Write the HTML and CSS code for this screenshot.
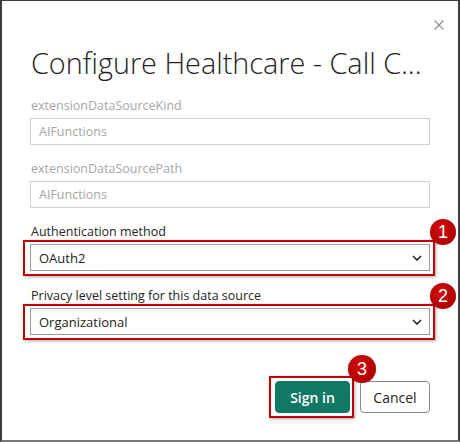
FILE: index.html
```html
<!DOCTYPE html>
<html>
<head>
<meta charset="utf-8">
<link rel="stylesheet" href="styles.css">
</head>
<body>
<div class="dialog">
  <div class="header">
    <svg class="close" width="10" height="10" viewBox="0 0 10 10"><path d="M0.5 0.5 L9.5 9.5 M9.5 0.5 L0.5 9.5" stroke="#8c8c8c" stroke-width="1.1" fill="none"/></svg>
  </div>
  <h1 class="title">Configure Healthcare - Call C...</h1>
  <div class="fields">
    <div class="field disabled">
      <div class="label">extensionDataSourceKind</div>
      <div class="input">AIFunctions</div>
    </div>
    <div class="field disabled">
      <div class="label">extensionDataSourcePath</div>
      <div class="input">AIFunctions</div>
    </div>
    <div class="field active">
      <div class="label">Authentication method</div>
      <div class="select-wrap">
        <div class="select">
          <span>OAuth2</span>
          <svg class="chev" width="10" height="6" viewBox="0 0 10 6"><path d="M1 1 L5 5 L9 1" fill="none" stroke="#252423" stroke-width="1.6"/></svg>
        </div>
        <div class="mark"></div>
        <div class="badge b1">1</div>
      </div>
    </div>
    <div class="field active">
      <div class="label">Privacy level setting for this data source</div>
      <div class="select-wrap">
        <div class="select">
          <span>Organizational</span>
          <svg class="chev" width="10" height="6" viewBox="0 0 10 6"><path d="M1 1 L5 5 L9 1" fill="none" stroke="#252423" stroke-width="1.6"/></svg>
        </div>
        <div class="mark"></div>
        <div class="badge b2">2</div>
      </div>
    </div>
  </div>
  <div class="actions">
    <div class="btn-wrap">
      <button class="btn primary">Sign in</button>
      <div class="mark mark-btn"></div>
      <div class="badge b3">3</div>
    </div>
    <button class="btn secondary">Cancel</button>
  </div>
</div>
</body>
</html>
```
FILE: styles.css
```css
* { box-sizing: border-box; }
html, body { margin: 0; padding: 0; background: #fff; }
body { font-family: "Open Sans", "Noto Sans", sans-serif; }
.dialog {
  width: 460px;
  height: 442px;
  border-style: solid;
  border-color: #3c3c3c #3c3c3c #7a7a7a #3c3c3c;
  border-width: 1px 2px 2px 2px;
  padding: 0 28px 0 28px;
  background: #fff;
}
.header {
  height: 42px;
  display: flex;
  justify-content: flex-end;
  align-items: flex-start;
  padding-top: 19px;
  margin-right: -14px;
}
.close { display: block; }
.title {
  margin: 0;
  font-weight: 300;
  font-size: 28.8px;
  line-height: 40px;
  color: #252423;
  padding-left: 1px;
  white-space: nowrap;
}
.fields { margin-top: 14px; display: flex; flex-direction: column; gap: 15px; }
.field { display: flex; flex-direction: column; gap: 3px; }
.label {
  font-size: 12.5px;
  line-height: 18px;
  padding-left: 1px;
  color: #252423;
}
.disabled .label { color: #a6a6a6; }
.input {
  height: 27px;
  border: 1px solid #d0d0d0;
  font-size: 12.5px;
  line-height: 25px;
  padding-left: 8px;
  color: #a6a6a6;
}
.field.active + .field.active { margin-top: 1px; }
.select-wrap { position: relative; }
.select {
  height: 27px;
  border: 1px solid #9a9a9a;
  display: flex;
  align-items: center;
  justify-content: space-between;
  padding: 0 7px 0 8px;
  font-size: 13px;
  color: #252423;
}
.mark {
  position: absolute;
  left: -7px; right: -5px; top: -4px; bottom: -5px;
  border: 2px solid #c00000;
  box-shadow: 1px 1px 3px rgba(0,0,0,0.35);
  pointer-events: none;
}
.badge {
  position: absolute;
  width: 26px; height: 26px;
  border-radius: 50%;
  background: radial-gradient(circle at 40% 35%, #d01010, #b00000 70%);
  color: #fff;
  font-family: "Liberation Sans", Arial, sans-serif;
  font-size: 18px;
  line-height: 26px;
  text-align: center;
  box-shadow: 0 0 1px rgba(0,0,0,0.5);
}
.b1, .b2 { right: -26px; top: -25px; }
.actions {
  margin-top: 46px;
  display: flex;
  justify-content: flex-end;
  gap: 10px;
}
.btn-wrap { position: relative; }
.btn {
  height: 32px;
  border-radius: 4px;
  font-family: "Open Sans", "Noto Sans", sans-serif;
  font-size: 14px;
  font-weight: 600;
  padding: 0;
  cursor: pointer;
}
.primary {
  width: 75px;
  background: #117865;
  border: 1px solid #117865;
  color: #fff;
  display: block;
}
.secondary {
  width: 70px;
  background: #fff;
  border: 1px solid #8a8a8a;
  color: #252423;
  font-weight: 400;
}
.mark-btn { left: -6px; right: -4px; top: -5px; bottom: -5px; }
.b3 { left: 73px; top: -26px; width: 28px; height: 28px; line-height: 28px; }
```
